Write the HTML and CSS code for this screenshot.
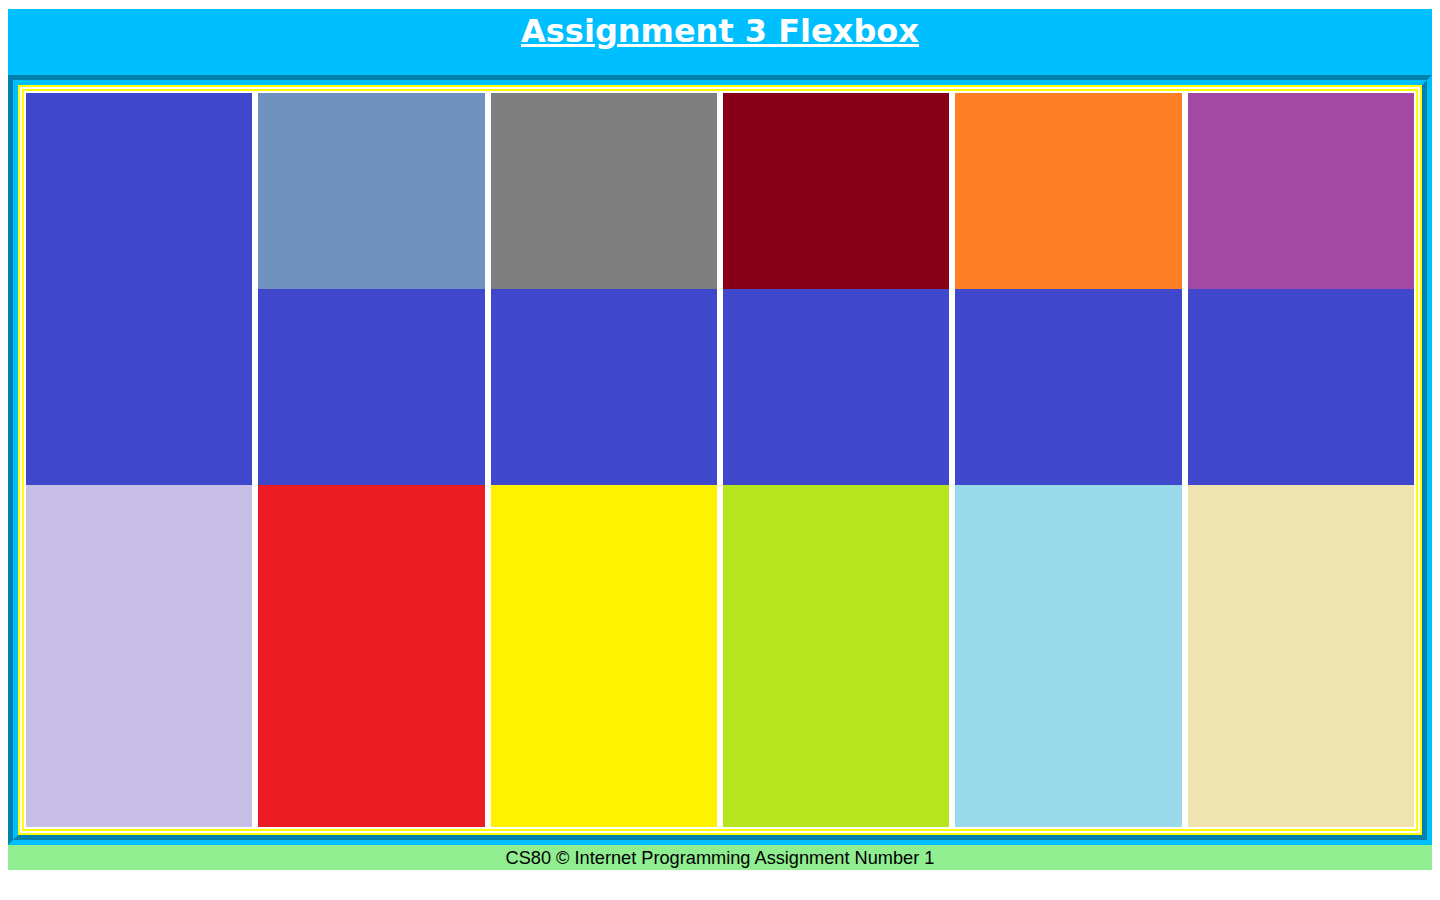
FILE: index.html
```html
<!DOCTYPE html>
<html lang="en">
<head>
<meta charset="utf-8">
<title>Assignment 3 Flexbox</title>
<link rel="stylesheet" href="styles.css">
</head>
<body>
<header class="site-header">
  <h1 class="title">Assignment 3 Flexbox</h1>
</header>
<main class="frame">
  <div class="board">
    <div class="column">
      <div class="cell tall indigo"></div>
      <div class="cell fill lavender"></div>
    </div>
    <div class="column">
      <div class="cell top steel"></div>
      <div class="cell mid indigo"></div>
      <div class="cell fill red"></div>
    </div>
    <div class="column">
      <div class="cell top gray"></div>
      <div class="cell mid indigo"></div>
      <div class="cell fill yellow"></div>
    </div>
    <div class="column">
      <div class="cell top maroon"></div>
      <div class="cell mid indigo"></div>
      <div class="cell fill lime"></div>
    </div>
    <div class="column">
      <div class="cell top orange"></div>
      <div class="cell mid indigo"></div>
      <div class="cell fill turquoise"></div>
    </div>
    <div class="column">
      <div class="cell top purple"></div>
      <div class="cell mid indigo"></div>
      <div class="cell fill cream"></div>
    </div>
  </div>
</main>
<footer class="site-footer">CS80 &copy; Internet Programming Assignment Number 1</footer>
</body>
</html>
```
FILE: styles.css
```css
html, body {
  background: #ffffff;
}
body {
  margin: 8px;
  font-family: "Liberation Sans", Arial, sans-serif;
}
.site-header {
  margin-top: 1px;
  height: 66px;
  background: #00bfff;
}
.title {
  margin: 0;
  padding-top: 6px;
  text-align: center;
  font-family: "DejaVu Sans", Verdana, sans-serif;
  font-size: 32px;
  font-weight: bold;
  line-height: 32px;
  color: #ffffff;
  text-decoration: underline;
}
.frame {
  display: block;
  height: 770px;
  box-sizing: border-box;
  border: 10px groove #00bfff;
}
.board {
  display: flex;
  gap: 6px;
  height: 100%;
  box-sizing: border-box;
  border: 6px double #ffff00;
  padding: 2px;
  background: #ffffff;
}
.column {
  flex: 1 1 0;
  display: flex;
  flex-direction: column;
}
.cell.top,
.cell.mid {
  height: 196px;
}
.cell.tall {
  height: 392px;
}
.cell.fill {
  flex: 1 1 auto;
}
.indigo { background: #3f48cc; }
.lavender { background: #c8bfe7; }
.steel { background: #7092be; }
.gray { background: #7f7f7f; }
.maroon { background: #880015; }
.orange { background: #ff7f27; }
.purple { background: #a349a4; }
.red { background: #ed1c24; }
.yellow { background: #fff200; }
.lime { background: #b5e61d; }
.turquoise { background: #99d9ea; }
.cream { background: #efe4b0; }
.site-footer {
  height: 25px;
  box-sizing: border-box;
  padding-top: 1px;
  background: #90ee90;
  text-align: center;
  font-size: 18.2px;
  line-height: 25px;
  color: #000000;
}
```
